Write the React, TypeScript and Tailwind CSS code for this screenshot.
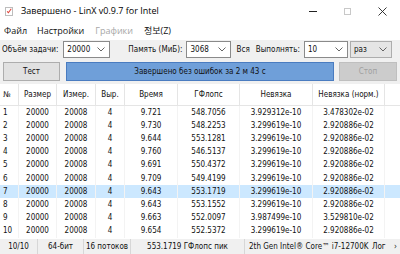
import React from 'react';

const rows = [
  ['1', '9.721', '548.7056', '3.929312e-10', '3.478302e-02'],
  ['2', '9.730', '548.2253', '3.299619e-10', '2.920886e-02'],
  ['3', '9.644', '553.1281', '3.299619e-10', '2.920886e-02'],
  ['4', '9.760', '546.5137', '3.299619e-10', '2.920886e-02'],
  ['5', '9.691', '550.4372', '3.299619e-10', '2.920886e-02'],
  ['6', '9.709', '549.4199', '3.299619e-10', '2.920886e-02'],
  ['7', '9.643', '553.1719', '3.299619e-10', '2.920886e-02'],
  ['8', '9.643', '553.1552', '3.299619e-10', '2.920886e-02'],
  ['9', '9.663', '552.0097', '3.987499e-10', '3.529810e-02'],
  ['10', '9.654', '552.5372', '3.299619e-10', '2.920886e-02'],
];

const Chevron = () => (
  <svg width="8" height="5" viewBox="0 0 8 5" className="shrink-0">
    <polyline points="0.5,0.5 4,4 7.5,0.5" fill="none" stroke="#555" strokeWidth="0.9" />
  </svg>
);

const Combo = ({ value, w, gray }: { value: string; w: string; gray?: boolean }) => (
  <div
    className={`${w} h-[17px] flex items-center justify-between pl-[3px] pr-[4px] border ${
      gray ? 'bg-[#e5e5e5] border-[#adadad]' : 'bg-white border-[#8a8a8a]'
    }`}
  >
    <span>{value}</span>
    <Chevron />
  </div>
);

// column widths: № | Размер | Измер. | Выр. | Время | ГФлопс | Невязка | Невязка (норм.) | rest
const cols = ['w-[19px]', 'w-[38px]', 'w-[39px]', 'w-[29px]', 'w-[53px]', 'w-[62px]', 'w-[73px]', 'w-[72px]'];

export default function App() {
  return (
    <div
      className="w-[400px] h-[254px] bg-white flex flex-col overflow-hidden text-[#111] text-[8px] font-stretch-condensed"
      style={{ fontFamily: "'DejaVu Sans Condensed', 'DejaVu Sans', sans-serif" }}
    >
      {/* Title bar */}
      <div className="h-[22px] flex items-center shrink-0">
        <div className="ml-[5px] w-[8px] h-[9px] border border-[#bdbdbd] bg-white flex items-center justify-center">
          <svg width="8" height="8" viewBox="0 0 8 8">
            <polyline points="1.5,4.5 3.2,6.3 7,1" fill="none" stroke="#e0443a" strokeWidth="1.4" />
          </svg>
        </div>
        <span className="ml-[8px] text-[9px] text-black font-stretch-normal" style={{ fontFamily: "'Open Sans', sans-serif" }}>
          Завершено - LinX v0.9.7 for Intel
        </span>
        <div className="ml-auto flex h-full">
          <div className="w-[34px] flex items-center justify-center">
            <div className="w-[8px] h-[1px] bg-[#222]" />
          </div>
          <div className="w-[35px] flex items-center justify-center">
            <div className="w-[7px] h-[7px] border border-[#c8c8c8]" />
          </div>
          <div className="w-[35px] flex items-center justify-center">
            <svg width="9" height="9" viewBox="0 0 9 9">
              <path d="M0.5 0.5 L8.5 8.5 M8.5 0.5 L0.5 8.5" stroke="#222" strokeWidth="0.9" />
            </svg>
          </div>
        </div>
      </div>

      {/* Menu */}
      <div
        className="h-[18px] flex items-center shrink-0 text-[9px] font-stretch-normal"
        style={{ fontFamily: "'Open Sans', 'Noto Sans CJK KR', sans-serif" }}
      >
        <span className="ml-[4px]">Файл</span>
        <span className="ml-[10px]">Настройки</span>
        <span className="ml-[11px] text-[#a7a7a7]">Графики</span>
        <span className="ml-[11px]">정보(Z)</span>
      </div>

      {/* Toolbar */}
      <div className="bg-[#f0f0f0] shrink-0 pt-[1px] pb-[3px] px-[2px]">
        <div className="flex items-center h-[17px]">
          <span>Объём задачи:</span>
          <div className="ml-[5px]">
            <Combo value="20000" w="w-[47px]" />
          </div>
          <span className="ml-[18px]">Память (МиБ):</span>
          <div className="ml-[4px]">
            <Combo value="3068" w="w-[45px]" />
          </div>
          <span className="ml-[5px]">Вся</span>
          <span className="ml-[6px]">Выполнять:</span>
          <div className="ml-[4px]">
            <Combo value="10" w="w-[44px]" />
          </div>
          <div className="ml-[2px]">
            <Combo value="раз" w="w-[42px]" gray />
          </div>
        </div>
        <div className="flex items-center h-[19px] mt-[4px] pl-[1px]">
          <div className="w-[57px] h-full border border-[#adadad] bg-[#e1e1e1] flex items-center justify-center">Тест</div>
          <div className="ml-[6px] w-[268px] h-full border border-[#4a7cc0] bg-[#6f9fd9] flex items-center justify-center">
            Завершено без ошибок за 2 м 43 с
          </div>
          <div className="ml-[5px] w-[58px] h-full border border-[#bfbfbf] bg-[#cccccc] text-[#a0a0a0] flex items-center justify-center">
            Стоп
          </div>
        </div>
      </div>

      {/* Table */}
      <div className="flex-1 bg-white flex flex-col min-h-0">
        <div className="h-[22px] flex items-stretch border-b border-[#e5e5e5] shrink-0">
          {['№', 'Размер', 'Измер.', 'Выр.', 'Время', 'ГФлопс', 'Невязка', 'Невязка (норм.)'].map((h, i) => (
            <div
              key={h}
              className={`${cols[i]} shrink-0 flex items-center border-r border-[#e5e5e5] ${
                i === 0 ? 'pl-[3px]' : 'justify-center'
              }`}
            >
              {h}
            </div>
          ))}
          <div className="flex-1" />
        </div>
        {rows.map((r) => {
          const cells = [r[0], '20000', '20008', '4', r[1], r[2], r[3], r[4]];
          return (
            <div key={r[0]} className={`h-[13.2px] flex items-center shrink-0 ${r[0] === '7' ? 'bg-[#cce8ff]' : ''}`}>
              {cells.map((c, i) => (
                <div
                  key={i}
                  className={`${cols[i]} shrink-0 h-full flex items-center border-r border-[#f3f3f3] ${
                    i === 0 ? 'pl-[3px]' : 'justify-center'
                  }`}
                >
                  {c}
                </div>
              ))}
              <div className="flex-1" />
            </div>
          );
        })}
      </div>

      {/* Status bar */}
      <div className="h-[15px] bg-[#f0f0f0] flex items-center shrink-0 whitespace-nowrap overflow-hidden">
        <div className="w-[37px] text-center">10/10</div>
        <div className="w-[46px] h-full flex items-center justify-center border-l border-[#d7d7d7]">64-бит</div>
        <div className="w-[47px] h-full flex items-center justify-center border-l border-[#d7d7d7]">16 потоков</div>
        <div className="w-[114px] h-full flex items-center justify-center border-l border-[#d7d7d7]">553.1719 ГФлопс пик</div>
        <div className="w-[122px] h-full flex items-center border-l border-[#d7d7d7] pl-[4px]">
          2th Gen Intel® Core™ i7-12700K
        </div>
        <div className="flex-1 h-full flex items-center pl-[6px]">
          <span>Лог</span>
          <span className="ml-auto mr-[3px]">›</span>
        </div>
      </div>
    </div>
  );
}
